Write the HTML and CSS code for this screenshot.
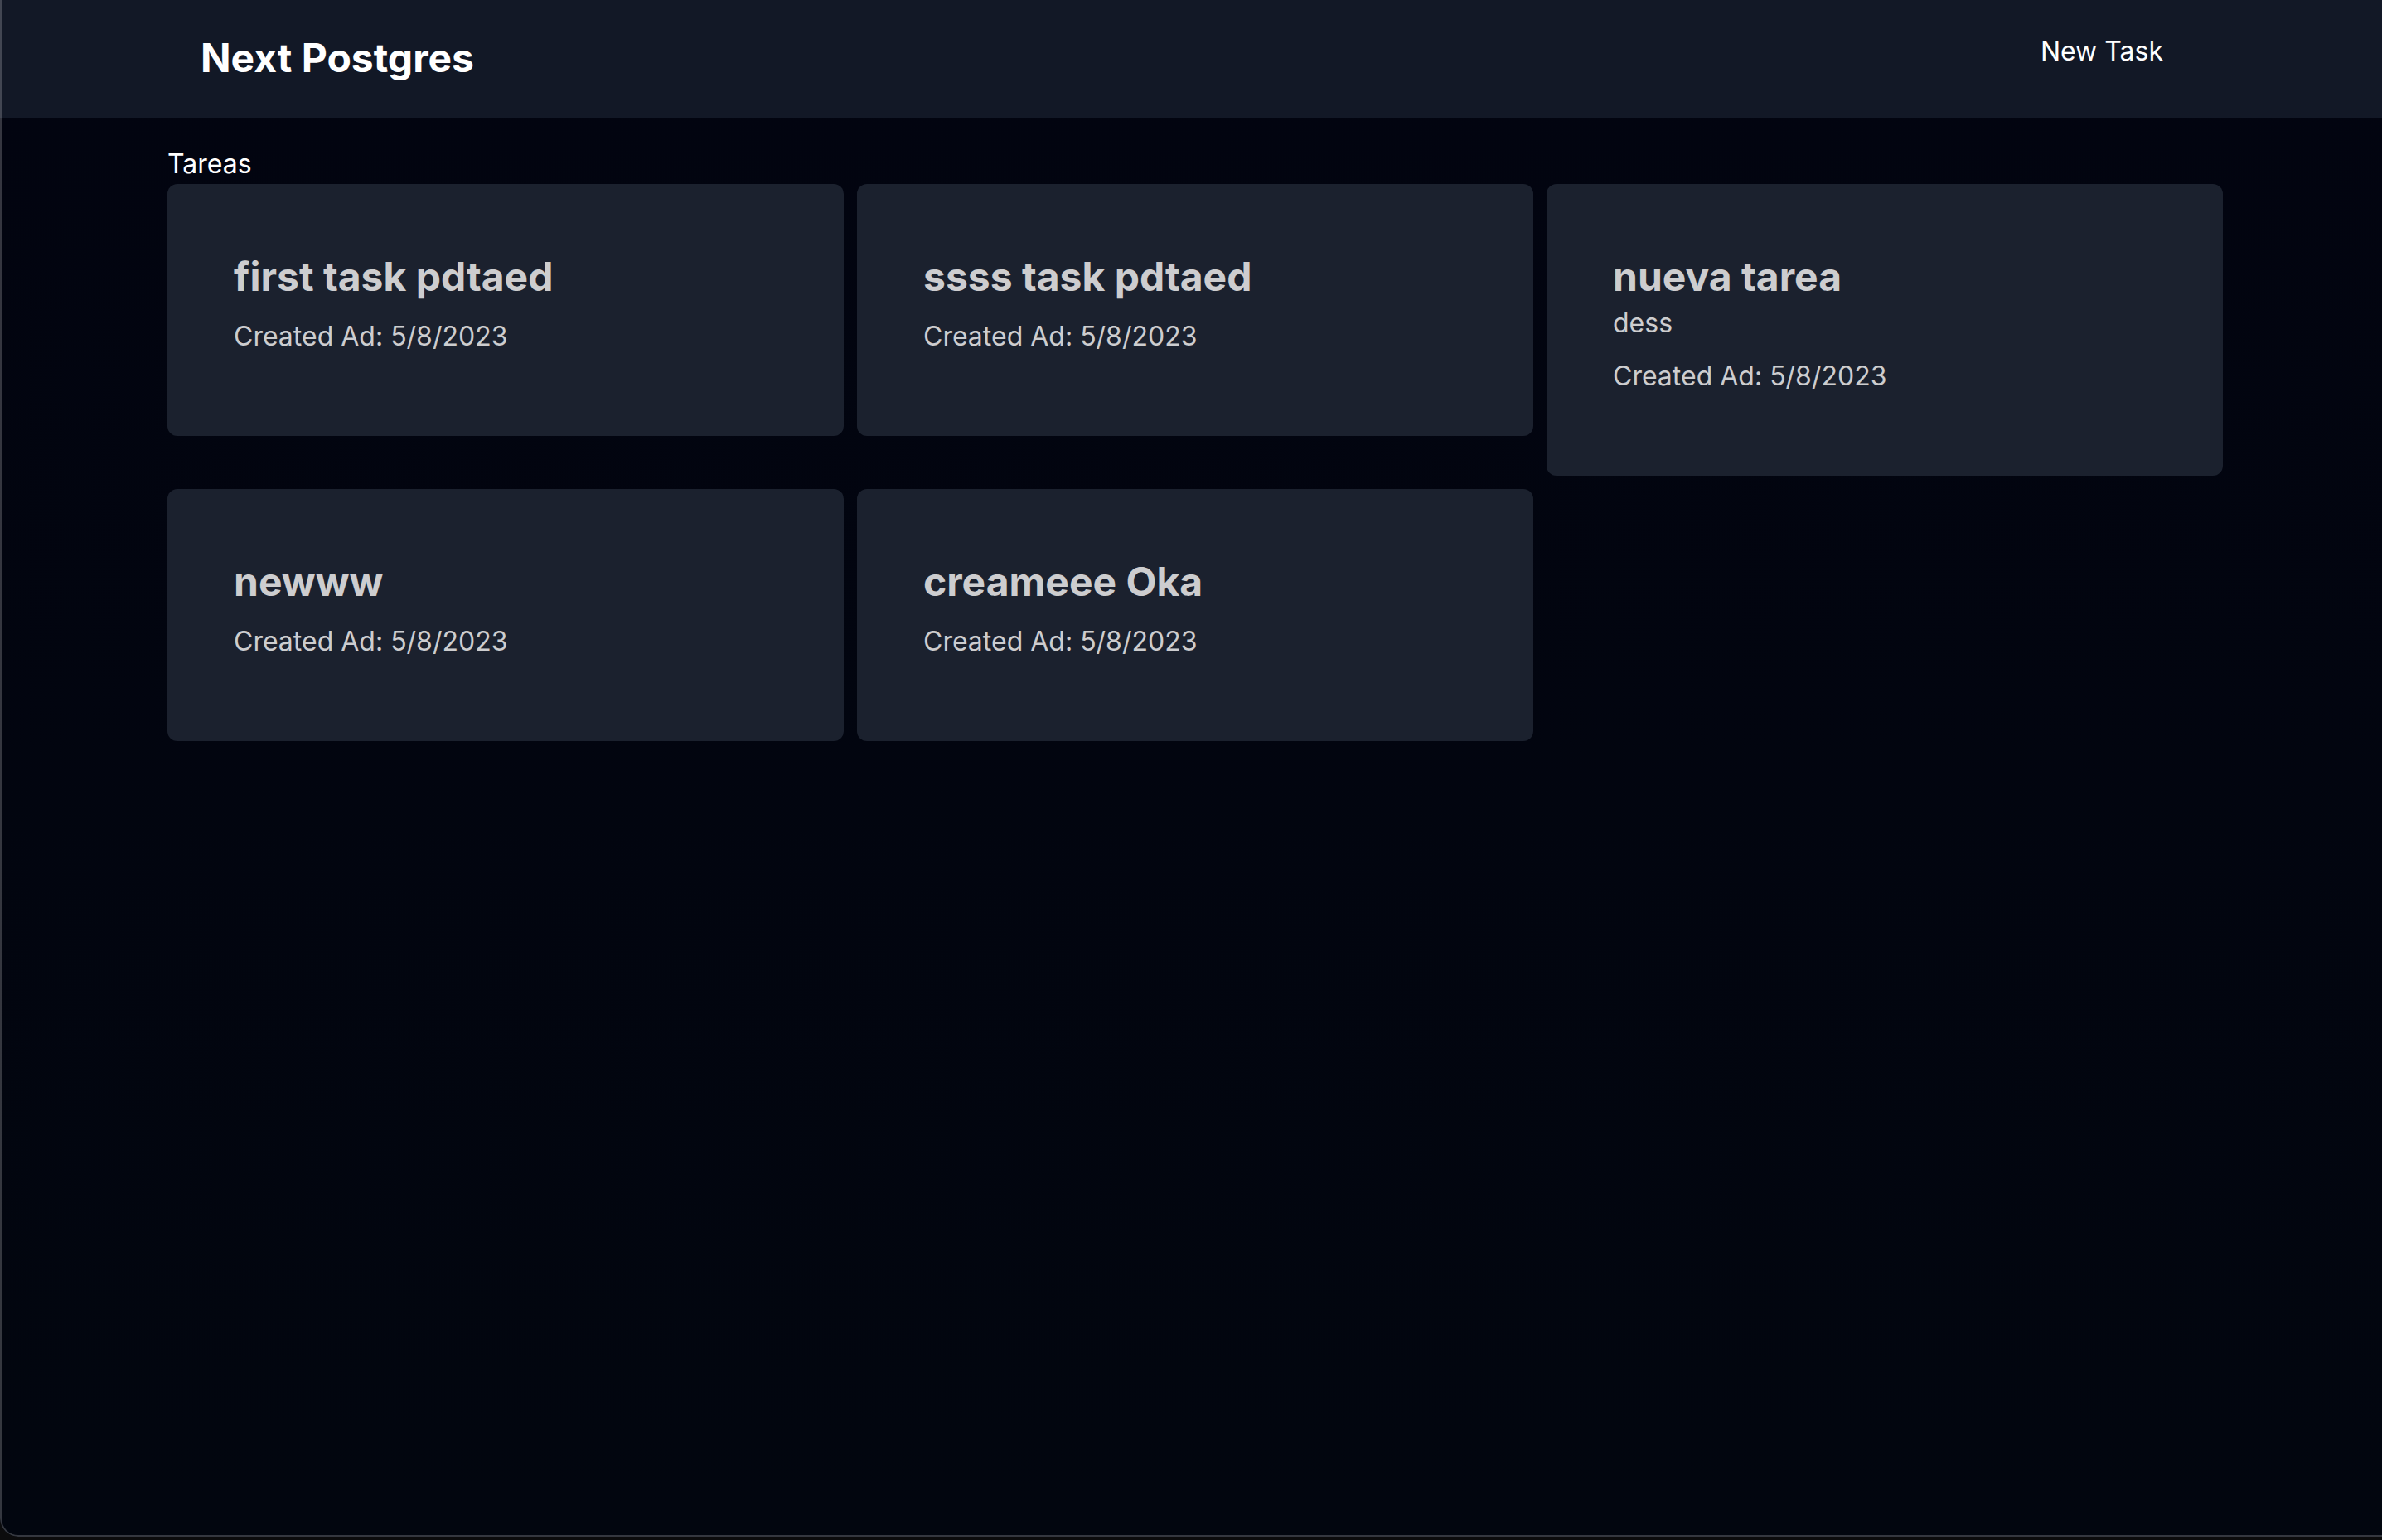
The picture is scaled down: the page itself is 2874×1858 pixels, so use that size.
FILE: index.html
```html
<!DOCTYPE html>
<html lang="es">
<head>
  <meta charset="utf-8">
  <meta name="viewport" content="width=device-width, initial-scale=1">
  <title>Next Postgres</title>
  <link rel="stylesheet" href="styles.css">
</head>
<body>
  <div class="window">
    <header class="navbar">
      <a class="brand" href="#"><h1 class="heading">Next Postgres</h1></a>
      <nav>
        <ul class="menu">
          <li><a class="menu-link" href="#new">New Task</a></li>
        </ul>
      </nav>
    </header>
    <main class="content">
      <h2 class="section-title">Tareas</h2>
      <div class="task-grid">
        <article class="card">
          <h3 class="heading">first task pdtaed</h3>
          <p class="created">Created Ad: 5/8/2023</p>
        </article>
        <article class="card">
          <h3 class="heading">ssss task pdtaed</h3>
          <p class="created">Created Ad: 5/8/2023</p>
        </article>
        <article class="card">
          <h3 class="heading">nueva tarea</h3>
          <p class="description">dess</p>
          <p class="created">Created Ad: 5/8/2023</p>
        </article>
        <article class="card">
          <h3 class="heading">newww</h3>
          <p class="created">Created Ad: 5/8/2023</p>
        </article>
        <article class="card">
          <h3 class="heading">creameee Oka</h3>
          <p class="created">Created Ad: 5/8/2023</p>
        </article>
      </div>
    </main>
  </div>
</body>
</html>
```
FILE: styles.css
```css
* {
  box-sizing: border-box;
  margin: 0;
  padding: 0;
}

body {
  min-height: 100vh;
  padding-bottom: 4px;
  background: #0c0c0d;
  color: #ffffff;
  font-family: Inter, "Liberation Sans", sans-serif;
  font-size: 32px;
  line-height: 48px;
}

a {
  color: inherit;
  text-decoration: none;
}

.window {
  position: relative;
  min-height: calc(100vh - 4px);
  overflow: hidden;
  border-radius: 0 0 0 22px;
  background: linear-gradient(#020410, #02060f);
}

/* Thin translucent window edge, drawn over the page */
.window::after {
  content: "";
  position: absolute;
  inset: 0;
  border: solid rgba(255, 255, 255, 0.2);
  border-width: 0 0 2px 2px;
  border-radius: 0 0 0 22px;
  pointer-events: none;
}

.navbar {
  display: flex;
  justify-content: space-between;
  align-items: flex-start;
  padding: 38px 264px 40px 242px;
  background: #121826;
}

.heading {
  font-size: 48px;
  font-weight: 700;
  line-height: 64px;
}

.menu {
  list-style: none;
}

.menu-link {
  display: block;
}

.content {
  padding: 32px 192px 32px 202px;
}

.section-title {
  font-size: 32px;
  font-weight: 400;
  line-height: 48px;
}

.task-grid {
  display: grid;
  grid-template-columns: repeat(3, minmax(0, 1fr));
  align-items: start;
  gap: 16px;
}

.card {
  padding: 80px;
  border-radius: 12px;
  background: #1b212e;
  color: #cdcdcf;
}

.created {
  margin: 16px 0;
}
```
